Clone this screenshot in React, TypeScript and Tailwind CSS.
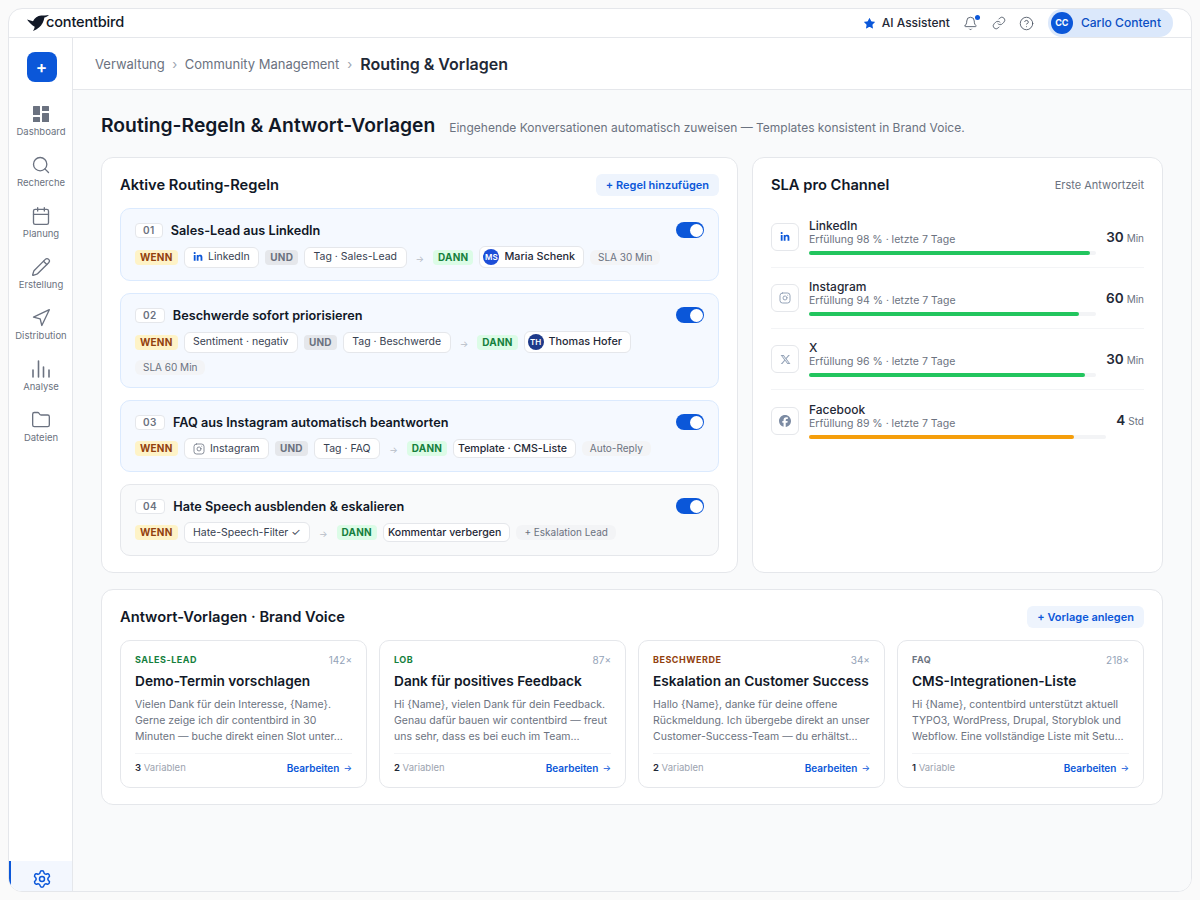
import { Bell, Calendar, CircleHelp, Folder, Instagram, Link, Navigation, Pencil, Search, Settings, Star } from "lucide-react";
import type { ReactNode } from "react";
import { FaFacebook, FaLinkedinIn, FaXTwitter } from "react-icons/fa6";

function DashboardIcon() {
  return (
    <svg width="16" height="16" viewBox="0 0 16 16" fill="#6b7280">
      <rect x="0" y="0" width="7" height="9" rx="0.5" />
      <rect x="9" y="0" width="7" height="5" rx="0.5" />
      <rect x="0" y="11" width="7" height="5" rx="0.5" />
      <rect x="9" y="7" width="7" height="9" rx="0.5" />
    </svg>
  );
}

function BarsIcon() {
  return (
    <svg width="20" height="20" viewBox="0 0 20 20" fill="none" stroke="#6b7280" strokeWidth="1.6" strokeLinecap="round">
      <path d="M2 11v7M7.500 2v16M12.500 8v10M18 11v7" />
    </svg>
  );
}

function BirdLogo() {
  return (
    <svg width="22" height="16" viewBox="0 0 22 16" fill="#111827">
      <path d="M0 4.500 6 6.200C7.600 3 10.500 .6 14.200 .4c2.400-.1 4.500 .4 7.800-.4-1.700 1.600-3.200 2-4.600 2.600-.5 3.800-2.400 7.700-5.400 9.900-1.700 1.300-3.700 2.600-6 3.500 .9-1.400 1.500-2.700 1.700-4.200C5 10.500 2.300 7.700 0 4.500Z" />
    </svg>
  );
}

function Toggle() {
  return (
    <div className="flex h-4 w-7 shrink-0 items-center justify-end rounded-full bg-[#0b57d9] pr-[1.5px]">
      <div className="h-[13px] w-[13px] rounded-full bg-white" />
    </div>
  );
}

function When() {
  return <span className="rounded-[4px] bg-[#fef3c7] px-[5px] py-[2px] text-[10px] leading-[11px] font-bold tracking-[0.2px] text-[#92400e]">WENN</span>;
}

function Then() {
  return <span className="rounded-[4px] bg-[#dcfce7] px-[5px] py-[2px] text-[10px] leading-[11px] font-bold tracking-[0.2px] text-[#15803d]">DANN</span>;
}

function And() {
  return <span className="rounded-[4px] bg-[#e5e7eb] px-[5px] py-[2px] text-[10px] leading-[11px] font-bold tracking-[0.2px] text-[#6b7280]">UND</span>;
}

function Arrow() {
  return <span className="mx-[3px] mt-0.5 text-[9px] leading-none text-[#b6bcc6]">→</span>;
}

function Chip({ children }: { children: ReactNode }) {
  return (
    <span className="flex h-[21px] items-center gap-[5px] rounded-md border border-[#e5e7eb] bg-white px-[8.5px] text-[10.5px] text-[#374151]">{children}</span>
  );
}

function Person({ initials, name, color }: { initials: string; name: string; color: string }) {
  return (
    <span className="flex h-[22px] items-center gap-[5px] rounded-md border border-[#e5e7eb] bg-white pr-2 pl-[3px] text-[10.8px] font-medium text-[#1f2937]">
      <span className={`flex h-4 w-4 items-center justify-center rounded-full text-[8px] font-semibold text-white ${color}`}>{initials}</span>
      {name}
    </span>
  );
}

function Action({ children }: { children: ReactNode }) {
  return <span className="flex h-[19px] items-center rounded-md border border-[#e5e7eb] bg-white pr-2 pl-1 text-[10.6px] font-medium text-[#1f2937]">{children}</span>;
}

function Note({ children }: { children: ReactNode }) {
  return <span className="rounded-md bg-[#f3f4f6] px-2 py-px text-[10px] leading-[13px] text-[#6b7280]">{children}</span>;
}

function Rule({ num, title, muted, children }: { num: string; title: string; muted?: boolean; children: ReactNode }) {
  return (
    <div className={`rounded-[10px] border px-[14px] pt-[13px] pb-[12px] ${muted ? "border-[#e5e7eb] bg-[#f9fafb]" : "border-[#dbeafe] bg-[#f5f9ff]"}`}>
      <div className="flex h-4 items-center">
        <span className="rounded-[4px] border border-[#e5e7eb] bg-white px-[7px] text-[10px] leading-[13px] font-semibold tracking-[0.5px] text-[#6b7280]">{num}</span>
        <span className="mt-px ml-2 text-[12.7px] leading-[18px] font-semibold text-[#111827]">{title}</span>
        <div className="ml-auto">
          <Toggle />
        </div>
      </div>
      <div className="mt-[8px] flex flex-wrap items-center gap-x-1.5 gap-y-[7px]">{children}</div>
    </div>
  );
}

const slaRows = [
  { name: "LinkedIn", sub: "Erfüllung 98 % · letzte 7 Tage", value: "30", unit: "Min", pct: 98, bar: "bg-[#22c55e]", icon: <FaLinkedinIn size={10} className="text-[#0b57d9]" /> },
  { name: "Instagram", sub: "Erfüllung 94 % · letzte 7 Tage", value: "60", unit: "Min", pct: 94, bar: "bg-[#22c55e]", icon: <Instagram size={12} className="text-[#94a3b8]" /> },
  { name: "X", sub: "Erfüllung 96 % · letzte 7 Tage", value: "30", unit: "Min", pct: 96, bar: "bg-[#22c55e]", icon: <FaXTwitter size={11} className="text-[#94a3b8]" /> },
  { name: "Facebook", sub: "Erfüllung 89 % · letzte 7 Tage", value: "4", unit: "Std", pct: 89, bar: "bg-[#f59e0b]", icon: <FaFacebook size={12} className="text-[#7c8ba3]" /> },
];

const templates = [
  { tag: "SALES-LEAD", tagColor: "text-[#15803d]", uses: "142×", title: "Demo-Termin vorschlagen", body: "Vielen Dank für dein Interesse, {Name}. Gerne zeige ich dir contentbird in 30 Minuten — buche direkt einen Slot unter…", count: "3", label: "Variablen" },
  { tag: "LOB", tagColor: "text-[#15803d]", uses: "87×", title: "Dank für positives Feedback", body: "Hi {Name}, vielen Dank für dein Feedback. Genau dafür bauen wir contentbird — freut uns sehr, dass es bei euch im Team…", count: "2", label: "Variablen" },
  { tag: "BESCHWERDE", tagColor: "text-[#92400e]", uses: "34×", title: "Eskalation an Customer Success", body: "Hallo {Name}, danke für deine offene Rückmeldung. Ich übergebe direkt an unser Customer-Success-Team — du erhältst…", count: "2", label: "Variablen" },
  { tag: "FAQ", tagColor: "text-[#6b7280]", uses: "218×", title: "CMS-Integrationen-Liste", body: "Hi {Name}, contentbird unterstützt aktuell TYPO3, WordPress, Drupal, Storyblok und Webflow. Eine vollständige Liste mit Setu…", count: "1", label: "Variable" },
];

const navItems = [
  { label: "Dashboard", icon: <DashboardIcon /> },
  { label: "Recherche", icon: <Search size={20} strokeWidth={1.6} className="text-[#6b7280]" /> },
  { label: "Planung", icon: <Calendar size={20} strokeWidth={1.6} className="text-[#6b7280]" /> },
  { label: "Erstellung", icon: <Pencil size={20} strokeWidth={1.6} className="text-[#6b7280]" /> },
  { label: "Distribution", icon: <Navigation size={20} strokeWidth={1.6} className="text-[#6b7280]" /> },
  { label: "Analyse", icon: <BarsIcon /> },
  { label: "Dateien", icon: <Folder size={20} strokeWidth={1.6} className="text-[#6b7280]" /> },
];

export default function App() {
  return (
    <div className="h-[900px] w-full bg-[#fafafa] p-2 font-['Inter',sans-serif]">
      <div className="flex h-full flex-col overflow-hidden rounded-[14px] border border-[#e5e7eb] bg-white">
        {/* Top bar */}
        <header className="flex h-[29px] shrink-0 items-center border-b border-[#e5e7eb] pr-[18px] pl-[18px]">
          <div className="flex items-center">
            <BirdLogo />
            <span className="ml-[-3px] text-[14.6px] font-medium tracking-[-0.2px] text-[#111827]">contentbird</span>
          </div>
          <div className="ml-auto flex items-center">
            <Star size={13} fill="#0b57d9" strokeWidth={0} className="text-[#0b57d9]" />
            <span className="ml-[6px] text-[12px] font-medium text-[#1f2937]">AI Assistent</span>
            <div className="relative ml-[13px]">
              <Bell size={15} strokeWidth={1.4} className="text-[#4b5563]" />
              <span className="absolute top-[-1px] right-[-2px] h-[5px] w-[5px] rounded-full bg-[#0b57d9]" />
            </div>
            <Link size={14} strokeWidth={1.4} className="ml-[14px] text-[#4b5563]" />
            <CircleHelp size={15} strokeWidth={1.4} className="ml-[13px] text-[#4b5563]" />
            <div className="ml-[14px] flex h-[28px] items-center rounded-full bg-[#dbe8fb] pr-3 pl-[3px]">
              <span className="flex h-[22px] w-[22px] items-center justify-center rounded-full bg-[#0b57d9] text-[9px] font-bold text-white">CC</span>
              <span className="ml-2 text-[12.1px] font-medium text-[#0b4fc4]">Carlo Content</span>
            </div>
          </div>
        </header>

        <div className="flex min-h-0 flex-1">
          {/* Sidebar */}
          <aside className="flex w-[64px] shrink-0 flex-col items-center border-r border-[#e5e7eb] bg-white">
            <div className="mt-[14px] ml-[2px] flex h-[30px] w-[30px] items-center justify-center rounded-lg bg-[#0b57d9] text-[17px] leading-none font-semibold text-white">+</div>
            <nav className="mt-[14px] flex w-full flex-col items-center gap-[3px] pl-px">
              {navItems.map((item) => (
                <div key={item.label} className="flex h-[48px] w-full flex-col items-center justify-center">
                  <div className="flex h-[22px] items-center justify-center">{item.icon}</div>
                  <span className="mt-px text-[9.5px] leading-[12px] text-[#6b7280]">{item.label}</span>
                </div>
              ))}
            </nav>
            <div className="mt-auto flex h-[30px] w-full items-center justify-center border-l-2 border-[#0b57d9] bg-[#f3f7fe] pt-[5px] pl-px">
              <Settings size={20} strokeWidth={1.8} className="text-[#0b57d9]" />
            </div>
          </aside>

          <main className="flex min-w-0 flex-1 flex-col bg-[#f9fafb]">
            {/* Breadcrumb */}
            <div className="flex h-[52px] shrink-0 items-center border-b border-[#e5e7eb] bg-white px-[22px] pt-[2px] text-[13px] text-[#6b7280]">
              <span>Verwaltung</span>
              <span className="mx-[7.5px] text-[#9ca3af]">›</span>
              <span>Community Management</span>
              <span className="mx-[8px] text-[#9ca3af]">›</span>
              <span className="mt-[-2px] text-[16px] font-semibold text-[#1f2937]">Routing &amp; Vorlagen</span>
            </div>

            <div className="flex-1 px-[28px] pt-[22px]">
              <div className="flex items-baseline">
                <h1 className="text-[19.3px] leading-[26px] font-semibold text-[#111827]">Routing-Regeln &amp; Antwort-Vorlagen</h1>
                <p className="ml-[14px] text-[12px] text-[#6b7280]">Eingehende Konversationen automatisch zuweisen — Templates konsistent in Brand Voice.</p>
              </div>

              <div className="mt-[19px] flex gap-[14px]">
                {/* Rules */}
                <section className="w-[637px] shrink-0 rounded-[12px] border border-[#e5e7eb] bg-white px-[18px] pt-[16px] pb-[16px]">
                  <div className="flex h-[22px] items-center justify-between">
                    <h2 className="text-[14.7px] font-semibold text-[#111827]">Aktive Routing-Regeln</h2>
                    <span className="flex h-[22px] items-center rounded-md bg-[#eef4fd] px-[10px] text-[11px] font-semibold text-[#0b57d9]">+ Regel hinzufügen</span>
                  </div>
                  <div className="mt-[12px] flex flex-col gap-[12px]">
                    <Rule num="01" title="Sales-Lead aus LinkedIn">
                      <When />
                      <Chip>
                        <FaLinkedinIn size={10} className="text-[#0b57d9]" />
                        LinkedIn
                      </Chip>
                      <And />
                      <Chip>Tag · Sales-Lead</Chip>
                      <Arrow />
                      <Then />
                      <Person initials="MS" name="Maria Schenk" color="bg-[#1d4ed8]" />
                      <Note>SLA 30 Min</Note>
                    </Rule>
                    <Rule num="02" title="Beschwerde sofort priorisieren">
                      <When />
                      <Chip>Sentiment · negativ</Chip>
                      <And />
                      <Chip>Tag · Beschwerde</Chip>
                      <Arrow />
                      <Then />
                      <Person initials="TH" name="Thomas Hofer" color="bg-[#1e3a8a]" />
                      <Note>SLA 60 Min</Note>
                    </Rule>
                    <Rule num="03" title="FAQ aus Instagram automatisch beantworten">
                      <When />
                      <Chip>
                        <Instagram size={12} strokeWidth={1.6} className="text-[#6b7280]" />
                        Instagram
                      </Chip>
                      <And />
                      <Chip>Tag · FAQ</Chip>
                      <Arrow />
                      <Then />
                      <Action>Template · CMS-Liste</Action>
                      <Note>Auto-Reply</Note>
                    </Rule>
                    <Rule num="04" title="Hate Speech ausblenden &amp; eskalieren" muted>
                      <When />
                      <Chip>Hate-Speech-Filter ✓</Chip>
                      <Arrow />
                      <Then />
                      <Action>Kommentar verbergen</Action>
                      <Note>+ Eskalation Lead</Note>
                    </Rule>
                  </div>
                </section>

                {/* SLA */}
                <section className="min-w-0 flex-1 rounded-[12px] border border-[#e5e7eb] bg-white px-[18px] pt-[16px]">
                  <div className="flex h-[22px] items-center justify-between">
                    <h2 className="text-[14.7px] font-semibold text-[#111827]">SLA pro Channel</h2>
                    <span className="text-[11px] text-[#6b7280]">Erste Antwortzeit</span>
                  </div>
                  <div className="mt-[11px]">
                    {slaRows.map((row) => (
                      <div key={row.name} className="flex h-[61px] items-center gap-[10px] border-b border-[#f3f4f6] last:border-b-0">
                        <div className="flex h-[28px] w-[28px] shrink-0 items-center justify-center rounded-md border border-[#e5e7eb] bg-white">{row.icon}</div>
                        <div className="min-w-0 flex-1">
                          <div className="text-[12px] leading-[13px] font-medium text-[#1f2937]">{row.name}</div>
                          <div className="text-[10.5px] leading-[15px] text-[#6b7280]">{row.sub}</div>
                          <div className="mt-[4px] h-1 rounded-full bg-[#f3f4f6]">
                            <div className={`h-1 rounded-full ${row.bar}`} style={{ width: `${row.pct}%` }} />
                          </div>
                        </div>
                        <div className="flex shrink-0 items-baseline gap-[3px]">
                          <span className="text-[13.5px] font-semibold text-[#1f2937]">{row.value}</span>
                          <span className="text-[10px] text-[#6b7280]">{row.unit}</span>
                        </div>
                      </div>
                    ))}
                  </div>
                </section>
              </div>

              {/* Templates */}
              <section className="mt-[16px] rounded-[12px] border border-[#e5e7eb] bg-white px-[18px] pt-[16px] pb-[16px]">
                <div className="flex h-[22px] items-center justify-between">
                  <h2 className="text-[14.7px] font-semibold text-[#111827]">Antwort-Vorlagen · Brand Voice</h2>
                  <span className="flex h-[22px] items-center rounded-md bg-[#eef4fd] px-[10px] text-[11px] font-semibold text-[#0b57d9]">+ Vorlage anlegen</span>
                </div>
                <div className="mt-[12px] grid grid-cols-4 gap-[12px]">
                  {templates.map((t) => (
                    <article key={t.title} className="rounded-[10px] border border-[#e5e7eb] bg-white px-[14px] pt-[13px] pb-[12px]">
                      <div className="flex items-center justify-between">
                        <span className={`text-[9px] leading-[12px] font-bold tracking-[0.5px] ${t.tagColor}`}>{t.tag}</span>
                        <span className="text-[10px] leading-[12px] text-[#94a3b8]">{t.uses}</span>
                      </div>
                      <h3 className="mt-[5px] text-[13.7px] leading-[20px] font-semibold whitespace-nowrap text-[#111827]">{t.title}</h3>
                      <p className="mt-[6px] text-[10.5px] leading-[16px] text-[#6b7280]">{t.body}</p>
                      <div className="mt-[8px] flex items-center justify-between border-t border-[#f3f4f6] pt-[6px]">
                        <span className="text-[9.5px] leading-[14px] text-[#9ca3af]">
                          <span className="font-semibold text-[#1f2937]">{t.count}</span> {t.label}
                        </span>
                        <span className="flex items-center gap-1 text-[10px] leading-[14px] font-semibold text-[#0b57d9]">
                          Bearbeiten
                          <span className="mt-px text-[9px] font-normal">→</span>
                        </span>
                      </div>
                    </article>
                  ))}
                </div>
              </section>
            </div>
          </main>
        </div>
      </div>
    </div>
  );
}
